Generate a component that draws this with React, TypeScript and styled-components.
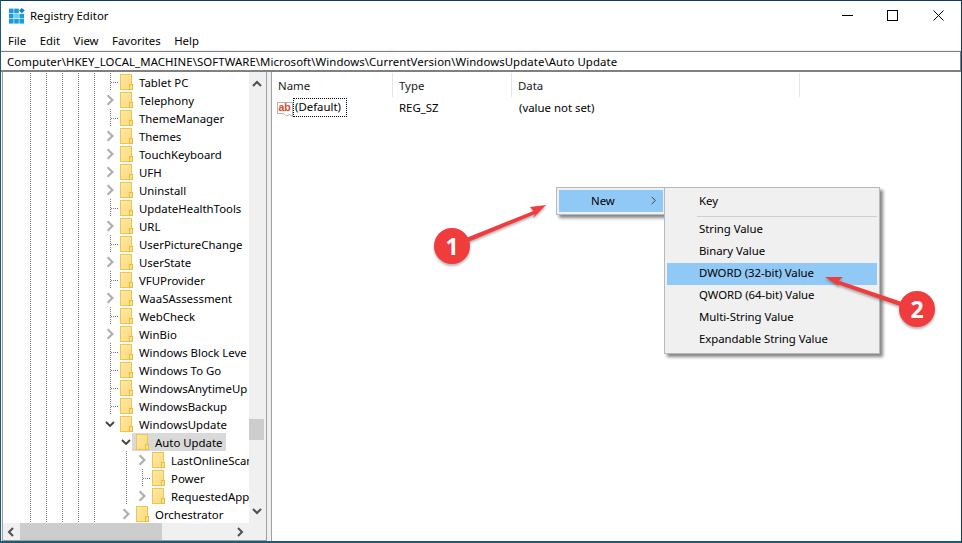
import React from "react";
import styled, { createGlobalStyle, css } from "styled-components";

const Global = createGlobalStyle`
  html, body { margin: 0; padding: 0; background: #fff; }
  #root { width: 962px; height: 543px; }
  * { box-sizing: border-box; }
`;

const UI_FONT = `"Noto Sans", "Open Sans", sans-serif`;

const Window = styled.div`
  position: relative;
  width: 962px;
  height: 543px;
  display: flex;
  flex-direction: column;
  overflow: hidden;
  background: #fff;
  border-top: 1px solid #123a66;
  border-left: 1px solid #1d5c75;
  border-right: 1px solid #17375f;
  border-bottom: 2px solid #1d5c75;
  font-family: ${UI_FONT};
  font-size: 11.4px;
  color: #000;
`;

const TitleBar = styled.div`
  height: 31px;
  flex: none;
  display: flex;
  align-items: center;
  padding-left: 8px;
`;
const Title = styled.span`
  margin-left: 5px;
  margin-top: -3px;
`;
const WindowControls = styled.div`
  margin-left: auto;
  display: flex;
`;
const ControlButton = styled.div<{ $w?: number }>`
  width: ${(p) => p.$w ?? 45}px;
  height: 31px;
  display: flex;
  align-items: center;
  justify-content: center;
  padding-bottom: 2px;
`;

const MenuBar = styled.div`
  height: 19px;
  flex: none;
  display: flex;
  align-items: center;
  gap: 13.5px;
  padding-left: 7px;
  padding-bottom: 2px;
  border-bottom: 1px solid #f0f0f0;
`;

const AddressBar = styled.div`
  height: 21px;
  flex: none;
  display: flex;
  align-items: center;
  padding-left: 6px;
  letter-spacing: 0.076px;
  white-space: nowrap;
  border-top: 1px solid #808080;
  border-right: 1px solid #808080;
  border-bottom: 2px solid #808080;
`;

const Panes = styled.div`
  flex: 1;
  min-height: 0;
  display: flex;
  background: #f0f0f0;
`;

const TreePane = styled.div`
  width: 265px;
  margin-left: 1px;
  flex: none;
  display: grid;
  grid-template-columns: 1fr 17px;
  grid-template-rows: 1fr 17px;
  border-left: 1px solid #a0a0a0;
  border-right: 1px solid #a0a0a0;
  border-bottom: 1px solid #a0a0a0;
  background: #fff;
`;

const TreeList = styled.div`
  min-width: 0;
  overflow: hidden;
  padding: 1px 0 0 19px;
`;

const dots = (x: number, y = 0) => css`
  background-image: repeating-linear-gradient(to bottom, #7a7a7a 0 1px, transparent 1px 2px);
  background-repeat: no-repeat;
  background-size: 1px 100%;
  background-position: ${x}px ${y}px;
`;

const Row = styled.div`
  height: 18px;
  display: flex;
  align-items: center;
  white-space: nowrap;
`;

const Guide = styled.span<{ $line?: boolean }>`
  width: 16px;
  height: 18px;
  flex: none;
  ${(p) => p.$line && dots(8)}
`;

const LeafCell = styled.span`
  width: 16px;
  height: 18px;
  flex: none;
  background-image:
    repeating-linear-gradient(to bottom, #7a7a7a 0 1px, transparent 1px 2px),
    repeating-linear-gradient(to right, #7a7a7a 0 1px, transparent 1px 2px);
  background-repeat: no-repeat;
  background-size: 1px 100%, 7px 1px;
  background-position: 8px 0, 9px 9px;
`;

const ExpanderCell = styled.span`
  width: 16px;
  height: 18px;
  flex: none;
  display: flex;
  align-items: center;
  justify-content: center;
`;

const Item = styled.div<{ $selected?: boolean }>`
  height: 18px;
  display: flex;
  align-items: center;
  gap: 6px;
  margin-left: -2px;
  padding: 0 3px 0 4px;
  background: ${(p) => (p.$selected ? "#d9d9d9" : "transparent")};
`;

const VScroll = styled.div`
  background: #f0f0f0;
  display: flex;
  flex-direction: column;
  align-items: center;
  justify-content: space-between;
  padding: 7px 2px 7px 0;
  position: relative;
`;
const VThumb = styled.div`
  position: absolute;
  left: 0;
  right: 2px;
  top: 347px;
  height: 21px;
  background: #cdcdcd;
`;
const HScroll = styled.div`
  background: #f0f0f0;
  display: flex;
  align-items: center;
  justify-content: space-between;
  padding: 0 4px 0 3px;
  position: relative;
`;
const HThumb = styled.div`
  position: absolute;
  left: 17px;
  top: 0;
  bottom: 0;
  width: 142px;
  background: #cdcdcd;
`;
const ScrollCorner = styled.div`
  background: #f0f0f0;
`;

const Splitter = styled.div`
  width: 4px;
  flex: none;
`;

const ListPane = styled.div`
  flex: 1;
  background: #fff;
  border-left: 1px solid #a0a0a0;
  display: flex;
  flex-direction: column;
`;

const ListHeader = styled.div`
  height: 25px;
  flex: none;
  display: flex;
  padding-top: 1px;
`;
const HeaderCell = styled.div<{ $w: number }>`
  width: ${(p) => p.$w}px;
  flex: none;
  display: flex;
  align-items: center;
  padding-left: 6px;
  border-right: 1px solid #e5e5e5;
  color: #1a1a1a;
`;

const ListRow = styled.div`
  height: 20px;
  padding-top: 1px;
  display: flex;
  align-items: center;
`;
const NameCell = styled.div`
  width: 120px;
  flex: none;
  display: flex;
  align-items: center;
  padding-left: 5px;
`;
const ValueCell = styled.div<{ $w?: number }>`
  width: ${(p) => p.$w ?? 120}px;
  flex: none;
  padding-left: 7px;
`;
const FocusName = styled.span`
  outline: 1px dotted #000;
  outline-offset: -1px;
  padding: 1px 6px 2px 2px;
  margin-left: -1px;
  line-height: 16px;
`;

const MenuBase = styled.div`
  position: absolute;
  background: #f0f0f0;
  border: 1px solid #b9b9b9;
  box-shadow: 3px 3px 3px rgba(70, 70, 70, 0.65);
`;
const NewMenu = styled(MenuBase)`
  left: 555px;
  top: 186px;
  width: 109px;
  height: 28px;
  padding: 2px 1px 2px 2px;
`;
const NewItem = styled.div`
  height: 22px;
  background: #90c8f6;
  display: flex;
  align-items: center;
  padding: 0 5px 2px 32px;
  justify-content: space-between;
`;
const SubMenu = styled(MenuBase)`
  left: 663px;
  top: 186px;
  width: 216px;
  height: 167px;
  padding: 3px 2px 2px;
`;
const SubItem = styled.div<{ $hot?: boolean }>`
  height: 22px;
  display: flex;
  align-items: center;
  padding: 0 0 4px 32px;
  letter-spacing: -0.05px;
  background: ${(p) => (p.$hot ? "#90c8f6" : "transparent")};
`;
const SubSeparator = styled.div`
  height: 1px;
  margin: 3px 0 2px 30px;
  background: #cfcfcf;
`;

const Annotations = styled.svg`
  position: absolute;
  left: -1px;
  top: -1px;
  width: 962px;
  height: 543px;
  pointer-events: none;
  filter: drop-shadow(0 2px 1px rgba(70, 70, 70, 0.4));
`;
const Badge = styled.div<{ $x: number; $y: number }>`
  position: absolute;
  left: ${(p) => p.$x - 19}px;
  top: ${(p) => p.$y - 19}px;
  width: 36px;
  height: 36px;
  display: flex;
  align-items: center;
  justify-content: center;
  border-radius: 50%;
  color: #fff;
  font-family: "Open Sans", "Liberation Sans", sans-serif;
  font-weight: 700;
  font-size: 23px;
  line-height: 1;
`;

const Folder = () => (
  <svg width="13" height="16" viewBox="0 0 13 16" style={{ flex: "none" }}>
    <defs>
      <linearGradient id="fg" x1="0" y1="0" x2="1" y2="1">
        <stop offset="0" stopColor="#ffe9a5" />
        <stop offset="1" stopColor="#fdd97b" />
      </linearGradient>
    </defs>
    <rect x="0.5" y="0.5" width="11" height="15" fill="url(#fg)" stroke="#ecc650" />
    <rect x="9.5" y="10.5" width="3" height="5" fill="#fbe08e" stroke="#e6bd3c" />
  </svg>
);

const Chevron = ({ dir, color, size = 10, w = 1.8 }: { dir: "r" | "d" | "u" | "l"; color: string; size?: number; w?: number }) => {
  const pts = { r: "3,1 7,5 3,9", l: "7,1 3,5 7,9", d: "1,3 5,7 9,3", u: "1,7 5,3 9,7" }[dir];
  return (
    <svg width={size} height={size} viewBox="0 0 10 10" style={{ flex: "none", position: "relative", zIndex: 1 }}>
      <polyline points={pts} fill="none" stroke={color} strokeWidth={w} />
    </svg>
  );
};

const AppIcon = () => (
  <svg width="16" height="16" viewBox="0 0 16 16" style={{ marginTop: -2 }}>
    {[0, 5.2, 10.4].flatMap((y) =>
      [0, 5.2, 10.4].map((x) =>
        x > 10 && y === 0 ? null : (
          <rect key={`${x}-${y}`} x={x} y={y + 0.6} width="4.6" height="4.6" fill={x === 5.2 && y === 5.2 ? "#6cc9f2" : "#1a9ddc"} />
        )
      )
    )}
    <polygon points="12.8,0 15.8,2.6 12.8,5.2 10,2.6" fill="#1a7fb8" />
  </svg>
);

const ValueIcon = () => (
  <svg width="17" height="17" viewBox="0 0 17 17" style={{ flex: "none", marginTop: 3 }}>
    <path d="M0.5 1.5H15.5V15.5L12.5 13.5L9.5 15L6.5 12.5H0.5Z" fill="#fff" stroke="#b4b4b4" />
    <text x="1.5" y="10" fontFamily="'Liberation Sans', sans-serif" fontWeight="700" fontSize="10.5" fill="#e0481e">ab</text>
  </svg>
);

type Kind = "leaf" | "closed";
const topRows: [string, Kind][] = [
  ["Tablet PC", "leaf"],
  ["Telephony", "closed"],
  ["ThemeManager", "leaf"],
  ["Themes", "closed"],
  ["TouchKeyboard", "closed"],
  ["UFH", "closed"],
  ["Uninstall", "closed"],
  ["UpdateHealthTools", "leaf"],
  ["URL", "closed"],
  ["UserPictureChange", "leaf"],
  ["UserState", "closed"],
  ["VFUProvider", "leaf"],
  ["WaaSAssessment", "closed"],
  ["WebCheck", "leaf"],
  ["WinBio", "closed"],
  ["Windows Block Leve", "leaf"],
  ["Windows To Go", "leaf"],
  ["WindowsAnytimeUp", "leaf"],
  ["WindowsBackup", "leaf"],
];

const Guides = () => (
  <>
    {[0, 1, 2, 3, 4].map((i) => (
      <Guide key={i} $line />
    ))}
  </>
);
const Closed = () => (
  <ExpanderCell>
    <Chevron dir="r" color="#adadad" size={12} w={1.8} />
  </ExpanderCell>
);
const Open = () => (
  <ExpanderCell>
    <Chevron dir="d" color="#404040" size={10} w={1.8} />
  </ExpanderCell>
);
const Node = ({ label, selected }: { label: string; selected?: boolean }) => (
  <Item $selected={selected}>
    <Folder />
    <span>{label}</span>
  </Item>
);

export default function App() {
  return (
    <Window>
      <Global />
      <TitleBar>
        <AppIcon />
        <Title>Registry Editor</Title>
        <WindowControls>
          <ControlButton>
            <svg width="11" height="11" viewBox="0 0 11 11"><path d="M0 5.5H11" stroke="#000" /></svg>
          </ControlButton>
          <ControlButton>
            <svg width="11" height="11" viewBox="0 0 11 11"><rect x=".5" y=".5" width="10" height="10" fill="none" stroke="#000" /></svg>
          </ControlButton>
          <ControlButton $w={46}>
            <svg width="11" height="11" viewBox="0 0 11 11"><path d="M.5 .5L10.5 10.5M10.5 .5L.5 10.5" stroke="#000" /></svg>
          </ControlButton>
        </WindowControls>
      </TitleBar>
      <MenuBar>
        <span>File</span>
        <span>Edit</span>
        <span>View</span>
        <span>Favorites</span>
        <span>Help</span>
      </MenuBar>
      <AddressBar>Computer\HKEY_LOCAL_MACHINE\SOFTWARE\Microsoft\Windows\CurrentVersion\WindowsUpdate\Auto Update</AddressBar>
      <Panes>
        <TreePane>
          <TreeList>
            {topRows.map(([label, kind]) => (
              <Row key={label}>
                <Guides />
                {kind === "leaf" ? <LeafCell /> : <Closed />}
                <Node label={label} />
              </Row>
            ))}
            <Row>
              <Guides />
              <Open />
              <Node label="WindowsUpdate" />
            </Row>
            <Row>
              <Guides />
              <Guide />
              <Open />
              <Node label="Auto Update" selected />
            </Row>
            <Row>
              <Guides />
              <Guide />
              <Guide $line />
              <Closed />
              <Node label="LastOnlineScan" />
            </Row>
            <Row>
              <Guides />
              <Guide />
              <Guide $line />
              <LeafCell />
              <Node label="Power" />
            </Row>
            <Row>
              <Guides />
              <Guide />
              <Guide $line />
              <Closed />
              <Node label="RequestedApp" />
            </Row>
            <Row>
              <Guides />
              <Guide />
              <Closed />
              <Node label="Orchestrator" />
            </Row>
          </TreeList>
          <VScroll>
            <Chevron dir="u" color="#505050" size={10} w={2} />
            <VThumb />
            <Chevron dir="d" color="#505050" size={10} w={2} />
          </VScroll>
          <HScroll>
            <Chevron dir="l" color="#505050" size={10} w={2} />
            <HThumb />
            <Chevron dir="r" color="#505050" size={10} w={2} />
          </HScroll>
          <ScrollCorner />
        </TreePane>
        <Splitter />
        <ListPane>
          <ListHeader>
            <HeaderCell $w={121}>Name</HeaderCell>
            <HeaderCell $w={119}>Type</HeaderCell>
            <HeaderCell $w={288}>Data</HeaderCell>
          </ListHeader>
          <ListRow>
            <NameCell>
              <ValueIcon />
              <FocusName>(Default)</FocusName>
            </NameCell>
            <ValueCell>REG_SZ</ValueCell>
            <ValueCell $w={280}>(value not set)</ValueCell>
          </ListRow>
        </ListPane>
      </Panes>

      <NewMenu>
        <NewItem>
          <span>New</span>
          <Chevron dir="r" color="#333" size={9} w={1} />
        </NewItem>
      </NewMenu>
      <SubMenu>
        <SubItem>Key</SubItem>
        <SubSeparator />
        <SubItem>String Value</SubItem>
        <SubItem>Binary Value</SubItem>
        <SubItem $hot>DWORD (32-bit) Value</SubItem>
        <SubItem>QWORD (64-bit) Value</SubItem>
        <SubItem>Multi-String Value</SubItem>
        <SubItem>Expandable String Value</SubItem>
      </SubMenu>

      <Annotations viewBox="0 0 962 543">
        <polygon points="546,205 530,207 533.5,211 466,238 468,242 535,214 533,218" fill="#f03c3c" />
        <polygon points="825,277 843,277 838.5,280.5 902,302 900,306 837,284 840,287" fill="#f03c3c" />
        <circle cx="452" cy="246" r="18" fill="#f03c3c" />
        <circle cx="917" cy="309" r="18" fill="#f03c3c" />
      </Annotations>
      <Badge $x={452} $y={246}>1</Badge>
      <Badge $x={917} $y={309}>2</Badge>
    </Window>
  );
}
